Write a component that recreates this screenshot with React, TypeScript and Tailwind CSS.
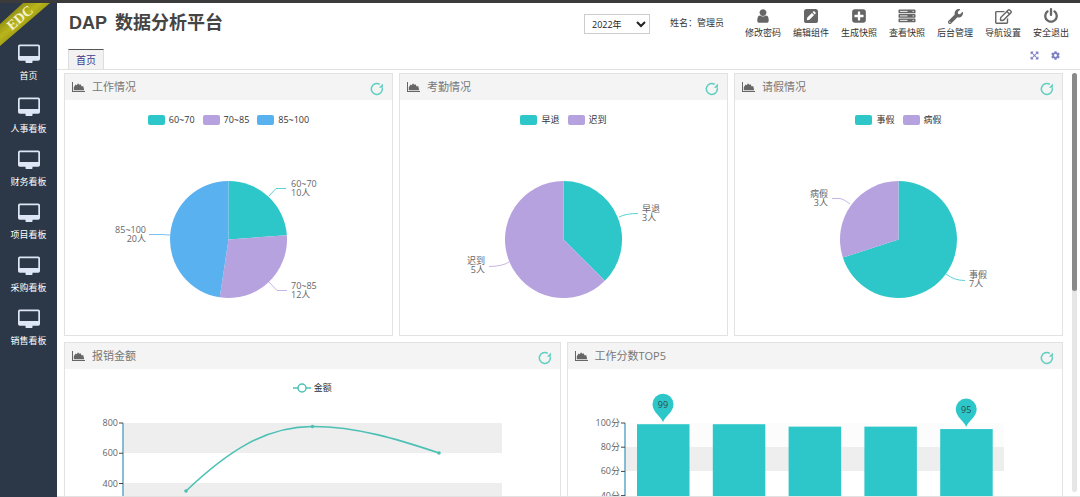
import { useState } from 'react';
import type { ReactNode } from 'react';
import { FaCog, FaExpandArrowsAlt, FaRegEdit, FaWrench } from 'react-icons/fa';

const TEAL = '#2ec7c9';
const PURPLE = '#b6a2de';
const BLUE = '#5ab1ef';

const navItems = ['首页', '人事看板', '财务看板', '项目看板', '采购看板', '销售看板'];

const UserIcon = () => (
  <svg viewBox="0 0 1792 1792" className="h-4 w-4" fill="currentColor">
    <path d="M1536 1399q0 109-62.5 187t-150.5 78h-854q-88 0-150.5-78t-62.5-187q0-85 8.5-160.5t31.5-152 58.5-131 94-89 134.5-34.5q131 128 313 128t313-128q76 0 134.5 34.5t94 89 58.5 131 31.5 152 8.5 160.5zm-256-887q0 159-112.5 271.5t-271.5 112.5-271.5-112.5-112.5-271.5 112.5-271.5 271.5-112.5 271.5 112.5 112.5 271.5z" />
  </svg>
);

const PencilSquareIcon = () => (
  <svg viewBox="0 0 16 16" className="h-4 w-4">
    <rect x="1" y="1" width="14" height="14" rx="2.6" fill="currentColor" />
    <path d="M3.8 12.2l.5-2.7 4.6-4.6 2.2 2.2-4.6 4.6zM9.6 4.2l.9-.9q.4-.4.8 0l1.4 1.4q.4.4 0 .8l-.9.9z" fill="#fff" />
  </svg>
);

const PlusSquareIcon = () => (
  <svg viewBox="0 0 1792 1792" className="h-4 w-4" fill="currentColor">
    <path d="M1408 960v-128q0-26-19-45t-45-19h-320v-320q0-26-19-45t-45-19h-128q-26 0-45 19t-19 45v320h-320q-26 0-45 19t-19 45v128q0 26 19 45t45 19h320v320q0 26 19 45t45 19h128q26 0 45-19t19-45v-320h320q26 0 45-19t19-45zm256-544v960q0 119-84.5 203.5t-203.5 84.5h-960q-119 0-203.5-84.5t-84.5-203.5v-960q0-119 84.5-203.5t203.5-84.5h960q119 0 203.5 84.5t84.5 203.5z" />
  </svg>
);

const ServerIcon = () => (
  <svg viewBox="0 0 18 16" className="h-4 w-[18px]">
    {[1.5, 6, 10.5].map((y) => (
      <g key={y}>
        <rect x="0.5" y={y} width="17" height="3.8" rx="0.9" fill="currentColor" />
        <path d={`M2 ${y + 1.9}h7.5M14.5 ${y + 1.9}h1.4`} stroke="#fff" strokeWidth="0.9" />
      </g>
    ))}
  </svg>
);

const PowerIcon = () => (
  <svg viewBox="0 0 1792 1792" className="h-4 w-4" fill="currentColor">
    <path d="M1664 896q0 156-61 298t-164 245-245 164-298 61-298-61-245-164-164-245-61-298q0-182 80.5-343t226.5-270q43-32 95.5-25t83.5 50q32 42 24.5 94.5t-49.5 84.5q-98 74-151.5 181t-53.5 228q0 104 40.5 198.5t109.5 163.5 163.5 109.5 198.5 40.5 198.5-40.5 163.5-109.5 109.5-163.5 40.5-198.5q0-121-53.5-228t-151.5-181q-42-32-49.5-84.5t24.5-94.5q31-43 84-50t95 25q146 109 226.5 270t80.5 343zm-640-768v640q0 52-38 90t-90 38-90-38-38-90v-640q0-52 38-90t90-38 90 38 38 90z" />
  </svg>
);

const DesktopIcon = () => (
  <svg viewBox="0 0 24 20" className="h-5 w-6">
    <path
      fillRule="evenodd"
      fill="#dde6f4"
      d="M2.8 0.5h18.4q1.8 0 1.8 1.8v12.6q0 1.8-1.8 1.8H15.500v1.200q0 1.200-1.200 1.200H9.700q-1.200 0-1.200-1.200v-1.200H2.8q-1.8 0-1.8-1.8V2.300q0-1.8 1.8-1.8zM3.200 2.300q-.5 0-.5.5v9.200h18.600V2.800q0-.5-.5-.5z"
    />
  </svg>
);

const AreaChartIcon = () => (
  <svg viewBox="0 0 13 10" className="h-[10px] w-[13px]" fill="#666">
    <path d="M0 0h1v9h12v1H0zM1.800 8.300V5.200L3.600 2.600 4.800 3.200 6 1.300 7.200 2.800 8.500 2.200 9.700 4.400 11.200 4 12.200 8.300z" />
  </svg>
);

const RefreshIcon = () => (
  <svg viewBox="0 0 14 14" className="h-[14px] w-[14px]" fill="none">
    <path d="M12.300 6.200A5.500 5.500 0 1 1 9.800 2.300" stroke="#5fcfc0" strokeWidth="1.500" />
    <path d="M12.900 1.600v4.200H8.900z" fill="#5fcfc0" />
  </svg>
);

const actions = [
  { label: '修改密码', icon: <UserIcon /> },
  { label: '编辑组件', icon: <PencilSquareIcon /> },
  { label: '生成快照', icon: <PlusSquareIcon /> },
  { label: '查看快照', icon: <ServerIcon /> },
  { label: '后台管理', icon: <FaWrench className="h-[15px] w-[15px]" /> },
  { label: '导航设置', icon: <FaRegEdit className="h-[15px] w-[17px]" /> },
  { label: '安全退出', icon: <PowerIcon /> }
];

type Slice = {
  name: string;
  value: number;
  color: string;
  x: number;
  y: number;
  anchor: 'start' | 'end';
  leader: string;
};

// Label positions are in the 327x210 box of the pie chart
const workData: Slice[] = [
  { name: '60~70', value: 10, color: TEAL, x: 226, y: 62, anchor: 'start', leader: 'M204 71L211 63.500H221' },
  { name: '70~85', value: 12, color: PURPLE, x: 226, y: 164, anchor: 'start', leader: 'M204 157L212 165.500H222' },
  { name: '85~100', value: 20, color: BLUE, x: 81, y: 108, anchor: 'end', leader: 'M105 110L96 109.500H84' }
];

const attendanceData: Slice[] = [
  { name: '早退', value: 3, color: TEAL, x: 242, y: 87, anchor: 'start', leader: 'M219 92Q226 88.500 238 88.500' },
  { name: '迟到', value: 5, color: PURPLE, x: 85, y: 139, anchor: 'end', leader: 'M109 137Q102 141.500 89 141.500' }
];

const leaveData: Slice[] = [
  { name: '事假', value: 7, color: TEAL, x: 234, y: 153, anchor: 'start', leader: 'M211 149Q219 155.500 230 155.500' },
  { name: '病假', value: 3, color: PURPLE, x: 93, y: 72, anchor: 'end', leader: 'M115 79Q108 73.500 104 73.500H97' }
];

const Panel = ({ title, children }: { title: string; children: ReactNode }) => (
  <section className="min-w-0 flex-1 border border-[#e2e2e2] bg-white">
    <header className="flex h-[26px] items-center bg-[#f4f4f4] pl-[7px] pr-2">
      <AreaChartIcon />
      <h2 className="ml-[7px] flex-1 text-[11px] leading-[26px] text-[#777]">{title}</h2>
      <button type="button" aria-label={`刷新${title}`} className="mt-1">
        <RefreshIcon />
      </button>
    </header>
    <div className="h-[235px]">{children}</div>
  </section>
);

const PieChart = ({ data }: { data: Slice[] }) => {
  const cx = 163.5;
  const cy = 114.5;
  const r = 58.5;
  const total = data.reduce((sum, d) => sum + d.value, 0);
  const point = (v: number) => {
    const a = (v / total) * Math.PI * 2;
    return `${cx + r * Math.sin(a)} ${cy - r * Math.cos(a)}`;
  };
  let start = 0;

  return (
    <>
      <ul className="flex h-[25px] justify-center gap-2 pt-[14px] text-[9px] leading-[10px] text-[#333]">
        {data.map((d) => (
          <li key={d.name} className="flex items-center gap-1">
            <span className="h-[10px] w-[17px] rounded-xs" style={{ backgroundColor: d.color }}></span>
            {d.name}
          </li>
        ))}
      </ul>
      <svg viewBox="0 0 327 210" className="h-[210px] w-full">
        {data.map((d) => {
          const from = point(start);
          start += d.value;
          const large = d.value / total > 0.5 ? 1 : 0;
          return (
            <g key={d.name}>
              <path d={`M${cx} ${cy}L${from}A${r} ${r} 0 ${large} 1 ${point(start)}Z`} fill={d.color} />
              <path d={d.leader} fill="none" stroke={d.color} strokeWidth="0.8" />
              <text y={d.y} textAnchor={d.anchor} fontSize="9" fill="#666">
                <tspan x={d.x}>{d.name}</tspan>
                <tspan x={d.x} dy="9">{`${d.value}人`}</tspan>
              </text>
            </g>
          );
        })}
      </svg>
    </>
  );
};

const LineChart = () => (
  <>
    <div className="flex h-[25px] items-center justify-center gap-[3px] pt-[13px] text-[9px] leading-[10px] text-[#333]">
      <svg viewBox="0 0 18 10" className="h-[10px] w-[18px]">
        <path d="M0 5h18" stroke="#4cc4b4" strokeWidth="1.500" />
        <circle cx="9" cy="5" r="4" fill="#fff" stroke="#4cc4b4" strokeWidth="1.500" />
      </svg>
      金额
    </div>
    <svg viewBox="0 0 480 210" preserveAspectRatio="xMinYMin" className="h-[210px] w-full">
      <rect x="58" y="29" width="379" height="30" fill="#eee" />
      <rect x="58" y="89" width="379" height="31" fill="#eee" />
      <path d="M58 29V150" stroke="#5fa8c8" strokeWidth="1.500" />
      {[800, 600, 400, 200, 0].map((v) => {
        const y = 150 - (v / 800) * 121;
        return (
          <g key={v}>
            <path d={`M54 ${y}h4`} stroke="#444" />
            <text x="53" y={Math.round(y) + 3} textAnchor="end" fontSize="9" fill="#666">
              {v}
            </text>
          </g>
        );
      })}
      <path d="M121 97C162 58 200 32.500 247.500 32.500C293 32.500 335 46 374 59" fill="none" stroke="#4cc0b4" strokeWidth="1.600" />
      <circle cx="121" cy="97" r="1.800" fill="#4cc0b4" />
      <circle cx="247.500" cy="32.500" r="1.800" fill="#4cc0b4" />
      <circle cx="374" cy="59" r="1.800" fill="#4cc0b4" />
    </svg>
  </>
);

const scores = [99, 99, 97, 97, 95];

const BarChart = () => {
  const scoreY = (v: number) => 175 - v * 1.21;

  return (
    <svg viewBox="0 0 480 235" preserveAspectRatio="xMinYMin" className="h-[235px] w-full">
      <rect x="57" y="54" width="379" height="24" fill="#fcfcfc" />
      <rect x="57" y="78" width="379" height="24" fill="#eee" />
      <rect x="57" y="127" width="379" height="24" fill="#eee" />
      <path d="M57 54V175" stroke="#5fa8c8" strokeWidth="1.500" />
      {[100, 80, 60, 40, 20, 0].map((v) => (
        <g key={v}>
          <path d={`M53 ${scoreY(v)}h4`} stroke="#444" />
          <text x="52" y={Math.round(scoreY(v)) + 3} textAnchor="end" fontSize="9" fill="#666">
            {`${v}分`}
          </text>
        </g>
      ))}
      {scores.map((s, i) => (
        <rect key={i} x={69 + i * 75.8} y={scoreY(s)} width="52.500" height={175 - scoreY(s)} fill={TEAL} />
      ))}
      {[0, 4].map((i) => {
        const x = 95 + i * 75.8;
        const y = scoreY(scores[i]) - 20;
        return (
          <g key={i}>
            <path
              d={`M${x} ${y + 18}C${x - 2} ${y + 12} ${x - 10.5} ${y + 8} ${x - 10.5} ${y}A10.5 10.5 0 0 1 ${x + 10.5} ${y}C${x + 10.5} ${y + 8} ${x + 2} ${y + 12} ${x} ${y + 18}Z`}
              fill={TEAL}
            />
            <text x={x} y={y + 4} textAnchor="middle" fontSize="9" fill="#2b4a4c">
              {scores[i]}
            </text>
          </g>
        );
      })}
    </svg>
  );
};

const Sidebar = () => (
  <aside className="relative w-[57px] shrink-0 bg-[#2c3747]">
    <svg viewBox="0 0 50 43" className="absolute left-0 top-0 h-[43px] w-[50px]">
      <defs>
        <linearGradient id="ribbon" x1="0" y1="0" x2="1" y2="1">
          <stop offset="0.2" stopColor="#8f8c12" />
          <stop offset="0.4" stopColor="#b9b61c" />
          <stop offset="0.6" stopColor="#8f8c12" />
        </linearGradient>
      </defs>
      <path d="M23 0H50L0 43V21Z" fill="url(#ribbon)" />
      <text
        x="21"
        y="19"
        textAnchor="middle"
        transform="rotate(-41 21 16)"
        fill="#f3f1d0"
        className="font-['Liberation_Serif',serif] text-[14px] font-bold"
      >
        EDC
      </text>
    </svg>
    <nav className="flex flex-col pt-[41px]">
      {navItems.map((item) => (
        <a key={item} href="#" className="flex h-[53px] flex-col items-center gap-[6px] text-[9px] leading-3 text-white">
          <DesktopIcon />
          {item}
        </a>
      ))}
    </nav>
  </aside>
);

const TopBar = () => {
  const [year, setYear] = useState('2022');

  return (
    <div className="flex h-[46px] items-start pl-3 pr-[11px]">
      <h1 className="flex flex-1 gap-2 pt-2 font-['Liberation_Sans','Noto_Sans_CJK_SC',sans-serif] text-[18px] font-bold leading-6 text-[#444]">
        <span>DAP</span>
        <span>数据分析平台</span>
      </h1>
      <select
        aria-label="年份"
        value={year}
        onChange={(e) => setYear(e.target.value)}
        className="mt-[11px] h-5 w-[66px] border border-[#ccc] bg-white pl-[3px] text-[9px] text-[#222]"
      >
        <option value="2022">2022年</option>
        <option value="2021">2021年</option>
      </select>
      <span className="ml-5 mt-[14px] text-[9px] leading-3 text-[#333]">姓名：管理员</span>
      <div className="ml-[21px] flex gap-3">
        {actions.map((a) => (
          <button key={a.label} type="button" className="flex w-9 flex-col items-center text-[9px] leading-3 text-[#333]">
            <span className="mb-[3px] mt-[5px] flex h-4 items-center text-[#666]">{a.icon}</span>
            <span className="whitespace-nowrap">{a.label}</span>
          </button>
        ))}
      </div>
    </div>
  );
};

const App = () => {
  return (
    <div className="flex h-screen flex-col bg-white font-['Open_Sans','Noto_Sans_CJK_SC',sans-serif]">
      <div className="h-[3px] shrink-0 bg-[#3b3b3b]"></div>
      <div className="flex min-h-0 flex-1">
        <Sidebar />
        <div className="flex min-w-0 flex-1 flex-col">
          <TopBar />
          <div className="flex h-[21px] shrink-0 items-stretch border-b border-[#e2e2e2] pl-[11px] pr-5">
            <button type="button" className="w-9 border border-b-0 border-[#ddd] border-t-[#555] bg-[#f2f2f2] text-[10px] leading-[18px] text-[#3a3a8c]">
              首页
            </button>
            <div className="ml-auto flex gap-3 pb-[7px] text-[#8080c4]">
              <button type="button" aria-label="全屏">
                <FaExpandArrowsAlt className="h-[9px] w-[9px]" />
              </button>
              <button type="button" aria-label="设置">
                <FaCog className="h-[9px] w-[9px]" />
              </button>
            </div>
          </div>
          <div className="flex min-h-0 flex-1 border-b border-[#e2e2e2] pl-[7px] pr-[3px] pt-[3px]">
            <main className="flex min-w-0 flex-1 flex-col gap-[6px] overflow-y-auto [scrollbar-width:none]">
              <div className="flex shrink-0 gap-[6px]">
                <Panel title="工作情况">
                  <PieChart data={workData} />
                </Panel>
                <Panel title="考勤情况">
                  <PieChart data={attendanceData} />
                </Panel>
                <Panel title="请假情况">
                  <PieChart data={leaveData} />
                </Panel>
              </div>
              <div className="flex shrink-0 gap-[6px]">
                <Panel title="报销金额">
                  <LineChart />
                </Panel>
                <Panel title="工作分数TOP5">
                  <BarChart />
                </Panel>
              </div>
            </main>
            <div className="mb-1 ml-[9px] w-[5px] rounded-full bg-[#e6e6e6]">
              <div className="h-[52%] rounded-full bg-[#8a8a8a]"></div>
            </div>
          </div>
        </div>
      </div>
    </div>
  );
};

export default App;
